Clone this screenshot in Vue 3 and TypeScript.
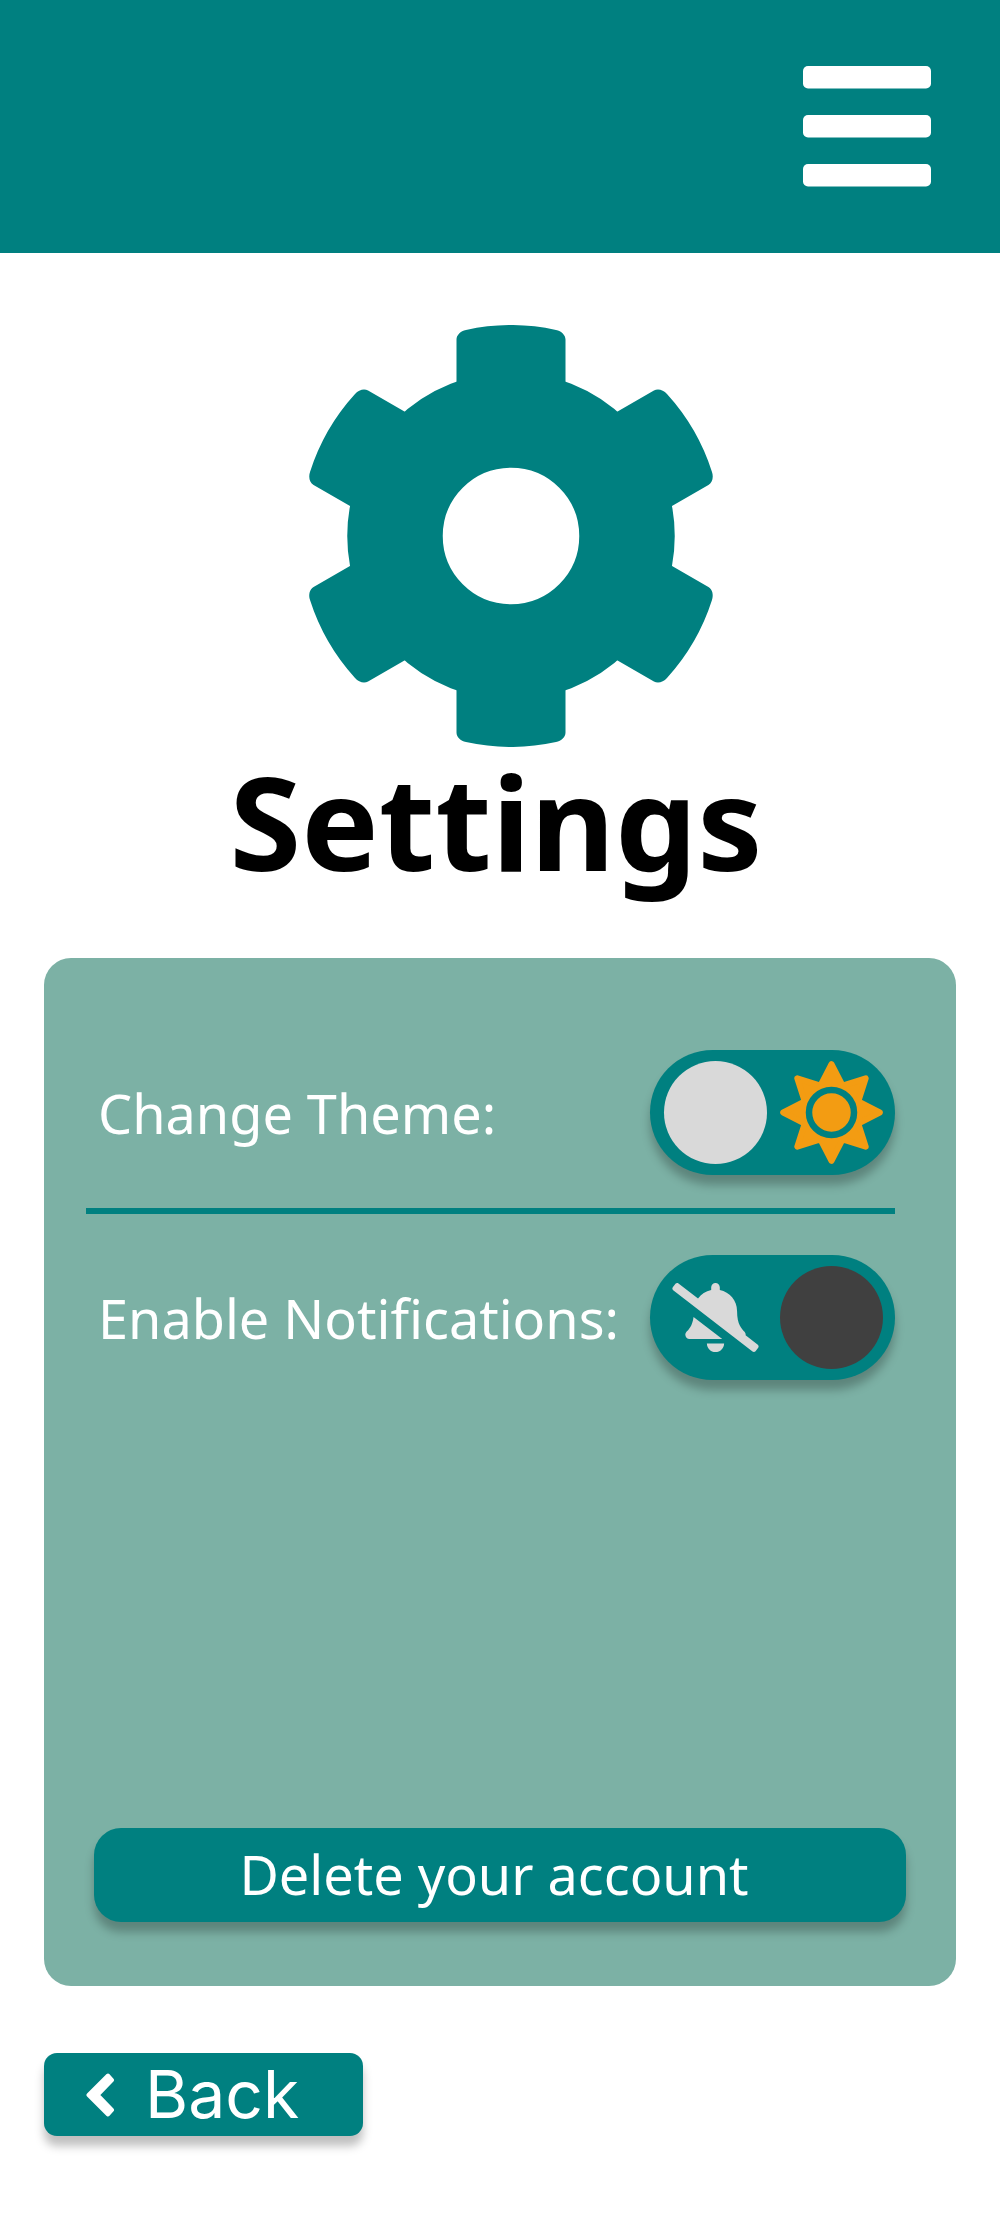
<script setup lang="ts">
import { ref } from 'vue'

const darkTheme = ref<boolean>(false)
const muted = ref<boolean>(true)

const toothAngles: number[] = [0, 60, 120, 180, 240, 300]
const menuBars: number[] = [0, 49, 98]
</script>

<template>
  <div class="page">
    <header class="topbar">
      <button class="menu" type="button" aria-label="Menu">
        <svg width="128" height="121" viewBox="0 0 128 121" aria-hidden="true">
          <rect v-for="y in menuBars" :key="y" x="0" :y="y" width="128" height="22.5" rx="5" fill="#fff" />
        </svg>
      </button>
    </header>

    <main class="content">
      <div class="hero">
        <svg class="gear" width="422" height="422" viewBox="-211 -211 422 422" aria-hidden="true">
          <circle r="116" fill="none" stroke="#008080" stroke-width="95.5" />
          <path
            v-for="angle in toothAngles"
            :key="angle"
            :transform="`rotate(${angle})`"
            fill="#008080"
            d="M-54.5 -145V-196.5C-54.5 -201 -50.5 -205 -45 -206.1A211 211 0 0 1 45 -206.1C50.5 -205 54.5 -201 54.5 -196.5V-145Z"
          />
        </svg>
      </div>
      <h1 class="title">Settings</h1>

      <section class="panel">
        <div class="options">
          <div class="row">
            <label for="theme">Change Theme:</label>
            <span class="toggle">
              <input id="theme" v-model="darkTheme" type="checkbox" role="switch" />
              <span class="face" :class="{ flipped: darkTheme }">
                <span class="knob" :class="{ dark: darkTheme }"></span>
                <svg width="103" height="103" viewBox="-51.5 -51.5 103 103" aria-hidden="true">
                  <path
                    d="M0 -48.3L11.1 -26.8L34.2 -34.2L26.8 -11.1L48.3 0L26.8 11.1L34.2 34.2L11.1 26.8L0 48.3L-11.1 26.8L-34.2 34.2L-26.8 11.1L-48.3 0L-26.8 -11.1L-34.2 -34.2L-11.1 -26.8Z"
                    fill="#f39c12"
                    stroke="#f39c12"
                    stroke-width="6"
                    stroke-linejoin="round"
                  />
                  <circle r="22.5" fill="#f39c12" stroke="#008080" stroke-width="6.5" />
                </svg>
              </span>
            </span>
          </div>

          <hr class="divider" />

          <div class="row">
            <label for="notifications">Enable Notifications:</label>
            <span class="toggle">
              <input id="notifications" v-model="muted" type="checkbox" role="switch" />
              <span class="face" :class="{ flipped: muted }">
                <span class="knob" :class="{ dark: muted }"></span>
                <svg width="103" height="103" viewBox="-62 -126 764 764" aria-hidden="true">
                  <path
                    fill="#d9d9d9"
                    d="M633.82 458.1l-90.62-70.05c.19-1.38.8-2.66.8-4.06.05-7.55-2.61-15.27-8.61-21.71-19.32-20.76-55.47-51.99-55.47-154.29 0-77.7-54.48-139.9-127.94-155.16V32c0-17.67-14.32-32-31.98-32s-31.98 14.33-31.98 32v20.84c-40.33 8.38-74.66 31.07-97.59 62.57L45.47 3.37C38.49-2.05 28.43-.8 23.01 6.18L3.37 31.45C-2.05 38.42-.8 48.47 6.18 53.9l588.35 454.73c6.98 5.43 17.03 4.17 22.46-2.81l19.64-25.27c5.42-6.97 4.17-17.02-2.81-22.45zM157.23 251.54c-8.61 67.96-36.41 93.33-52.62 110.75-6 6.45-8.66 14.16-8.61 21.71.11 16.4 12.98 32 32.1 32h241.92L157.23 251.54zM320 512c35.32 0 63.97-28.65 63.97-64H256.03c0 35.35 28.65 64 63.97 64z"
                  />
                </svg>
              </span>
            </span>
          </div>
        </div>

        <button class="delete" type="button">Delete your account</button>
      </section>

      <button class="back" type="button">
        <svg width="28" height="44" viewBox="0 0 28 44" aria-hidden="true">
          <path
            d="M2.5 22L22 2.5L26 7L11.500 22L26 37L22 41.500Z"
            fill="#fff"
            stroke="#fff"
            stroke-width="4"
            stroke-linejoin="round"
          />
        </svg>
        <span>Back</span>
      </button>
    </main>
  </div>
</template>

<style>
body {
  margin: 0;
  background: #fff;
}
</style>

<style scoped>
.page {
  min-height: 100vh;
  background: #fff;
  font-family: 'Noto Sans', sans-serif;
}

button {
  border: 0;
  padding: 0;
  background: none;
  cursor: pointer;
}

svg {
  display: block;
}

.topbar {
  display: flex;
  justify-content: flex-end;
  padding: 66px 69px;
  background: #008080;
}

.content {
  padding: 72px 44px;
}

.hero {
  display: flex;
  justify-content: center;
  padding-left: 22px;
}

.title {
  margin: 9px 8px 72px 0;
  font-size: 130px;
  line-height: 130px;
  font-weight: 700;
  text-align: center;
  color: #000;
}

.panel {
  display: flex;
  flex-direction: column;
  padding: 92px 0 64px;
  border-radius: 27px;
  background: #7cb1a5;
}

.options {
  padding: 0 61px 0 42px;
}

.row {
  display: flex;
  align-items: center;
  justify-content: space-between;
  padding-left: 12px;
  font-size: 54px;
  line-height: 74px;
  color: #fff;
}

.divider {
  height: 6px;
  margin: 33px 0 41px;
  border: 0;
  background: #008080;
}

.toggle {
  position: relative;
  display: flex;
  flex: none;
}

.toggle input {
  appearance: none;
  width: 245px;
  height: 125px;
  margin: 0;
  border-radius: 63px;
  background: #008080;
  box-shadow: 0 10px 10px rgba(0, 0, 0, 0.25);
  cursor: pointer;
}

.face {
  position: absolute;
  inset: 0;
  display: flex;
  align-items: center;
  justify-content: space-between;
  padding: 0 12px 0 14px;
  pointer-events: none;
}

.face.flipped {
  flex-direction: row-reverse;
}

.knob {
  width: 103px;
  height: 103px;
  border-radius: 50%;
  background: #d9d9d9;
}

.knob.dark {
  background: #404040;
}

.delete {
  margin: 448px 50px 0;
  padding: 9px 12px 11px 0;
  border-radius: 27px;
  background: #008080;
  box-shadow: 0 10px 10px rgba(0, 0, 0, 0.25);
  font-family: inherit;
  font-size: 54px;
  line-height: 74px;
  color: #fff;
}

.back {
  display: flex;
  align-items: center;
  gap: 31px;
  margin-top: 67px;
  padding: 0 64px 0 42px;
  border-radius: 13px;
  background: #008080;
  box-shadow: 0 10px 10px rgba(0, 0, 0, 0.25);
  font-family: Inter, sans-serif;
  font-size: 66px;
  font-weight: 400;
  line-height: 83px;
  color: #fff;
}
</style>
